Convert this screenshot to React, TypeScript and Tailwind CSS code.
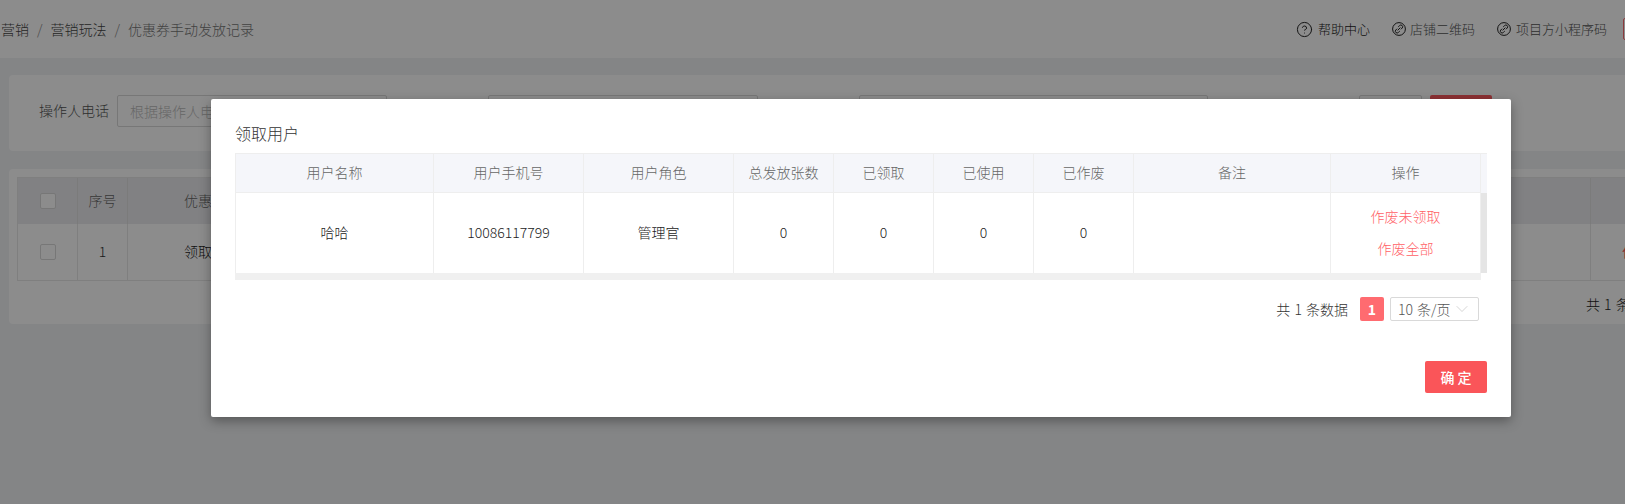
import { ChevronDown, CircleHelp } from 'lucide-react'

const columns = ['用户名称', '用户手机号', '用户角色', '总发放张数', '已领取', '已使用', '已作废', '备注', '操作']
const values = ['哈哈', '10086117799', '管理官', '0', '0', '0', '0', '']

function LinkCircle() {
  return (
    <svg width="14" height="14" viewBox="0 0 14 14" fill="none" stroke="currentColor" strokeWidth="1" className="shrink-0">
      <circle cx="7" cy="7" r="6.4" />
      <path d="M6.2 4.9 7.6 3.6a1.6 1.6 0 0 1 2.6 2.4L8.9 7.3" />
      <path d="M7.8 9.1 6.4 10.4a1.6 1.6 0 0 1-2.6-2.4l1.3-1.3" />
      <path d="M5.6 8.4 8.4 5.6" />
    </svg>
  )
}

function Checkbox() {
  return <div className="w-4 h-4 rounded-[2px] border border-[#d9d9d9] bg-white" />
}

export default function App() {
  return (
    <div className="relative w-[1625px] h-[504px] overflow-hidden bg-[#f0f2f5] text-sm font-light text-[#333] font-['Noto_Sans_CJK_SC','Noto_Sans',sans-serif]">
      <div className="w-[1708px]">
        {/* ヘッダー */}
        <div className="h-[58px] bg-white flex items-center">
          <div className="w-[1296px] shrink-0 pl-[1px] flex items-center text-[#555]">
            <span className="text-[#444]">营销</span>
            <span className="mx-[8px] text-[#888]">/</span>
            <span className="text-[#444]">营销玩法</span>
            <span className="mx-[8px] text-[#888]">/</span>
            <span className="text-[#777]">优惠券手动发放记录</span>
          </div>
          <div className="flex items-center text-[13px] text-[#222]">
            <CircleHelp size={17} strokeWidth={1.4} className="shrink-0" />
            <span className="ml-[5px] w-[74px]">帮助中心</span>
            <LinkCircle />
            <span className="ml-[4px] w-[87px] text-[#555]">店铺二维码</span>
            <LinkCircle />
            <span className="ml-[5px] w-[107px] text-[#555]">项目方小程序码</span>
            <div className="w-[60px] h-[22px] rounded-[2px] border border-[#ff6b70]" />
          </div>
        </div>

        {/* 検索エリア */}
        <div className="pt-[17px] pl-[9px]">
          <div className="h-[76px] bg-white rounded-[4px] pt-[20px] pl-[30px] flex items-start">
            <span className="w-[78px] leading-[30px] text-[#555]">操作人电话</span>
            <div className="w-[270px] h-8 pl-3 leading-[30px] border border-[#d9d9d9] rounded-[2px] text-[#bbb]">根据操作人电话搜索</div>
            <span className="w-[101px] leading-[32px] text-center text-[#555]">优惠券名称</span>
            <div className="w-[270px] h-8 border border-[#d9d9d9] rounded-[2px]" />
            <span className="w-[101px] leading-[32px] text-center text-[#555]">发放时间</span>
            <div className="w-[349px] h-8 border border-[#d9d9d9] rounded-[2px]" />
            <div className="w-[151px] shrink-0" />
            <div className="w-[63px] h-8 border border-[#d9d9d9] rounded-[2px] text-center leading-[30px]">重置</div>
            <div className="ml-[8px] w-[62px] h-8 rounded-[2px] bg-[#ff5a5f] text-white text-center leading-[32px]">查询</div>
          </div>
        </div>

        {/* 発放記録 */}
        <div className="pt-[18px] pl-[9px]">
          <div className="h-[155px] bg-white rounded-[4px] pt-[8px] pl-[8px] pr-[8px]">
            <div className="grid grid-cols-[60px_50px_182px_1fr_109px] border border-[#e8e8e8] h-[104px] grid-rows-[46px_56px]">
              <div className="bg-[#ebecef] flex items-center justify-center border-r border-[#e0e0e0]"><Checkbox /></div>
              <div className="bg-[#ebecef] flex items-center justify-center border-r border-[#e0e0e0] text-[#666] pb-[2px]">序号</div>
              <div className="bg-[#ebecef] flex items-center justify-center text-[#666] pb-[2px]">优惠券名称</div>
              <div className="bg-[#ebecef]" />
              <div className="bg-[#ebecef] border-l border-[#e0e0e0]" />
              <div className="flex items-center justify-center border-r border-[#e8e8e8]"><Checkbox /></div>
              <div className="flex items-center justify-center border-r border-[#e8e8e8] pb-[2px]">1</div>
              <div className="flex items-center justify-center pb-[2px] text-[#222]">领取用户券</div>
              <div />
              <div className="border-l border-[#e8e8e8] flex items-center pl-[31px] pb-[2px] font-normal text-[#ff5a5f]">作废</div>
            </div>
            <div className="pt-[13px] pl-[1569px] leading-[20px] [word-spacing:1px] text-[#222]">共 1 条数据</div>
          </div>
        </div>
      </div>

      {/* 弹窗 */}
      <div className="absolute inset-0 bg-black/45 pt-[99px] pl-[211px]">
        <div className="w-[1300px] h-[318px] bg-white rounded-[2px] shadow-[0_4px_12px_rgba(0,0,0,0.35)] pt-[24px] px-[24px]">
          <div className="h-[30px] text-base leading-[20px] text-[#333]">领取用户</div>
          <div className="w-[1252px]">
            <div className="flex h-[40px] bg-[#f5f6fa] border-t border-[#eeeeee]">
              <div className="w-[1246px] shrink-0 grid grid-cols-[198px_150px_150px_100px_100px_100px_100px_197px_150px] border-b border-l border-[#eeeeee]">
                {columns.map((c) => (
                  <div key={c} className="flex items-center justify-center border-r border-[#eeeeee] text-[#666] pb-[2px]">{c}</div>
                ))}
              </div>
            </div>
            <div className="flex h-[80px]">
              <div className="w-[1246px] shrink-0 grid grid-cols-[198px_150px_150px_100px_100px_100px_100px_197px_150px] border-l border-[#eeeeee]">
                {values.map((v, i) => (
                  <div key={i} className="flex items-center justify-center border-r border-[#eeeeee] text-[#222] pb-[3px]">{v}</div>
                ))}
                <div className="flex flex-col items-center justify-center gap-[10px] border-r border-[#eeeeee] text-[#ff6166] pb-[3px]">
                  <span className="leading-[22px]">作废未领取</span>
                  <span className="leading-[22px]">作废全部</span>
                </div>
              </div>
              <div className="w-[6px] bg-[#e5e5e5]" />
            </div>
            <div className="w-[1246px] h-[7px] bg-[#f0f0f0]" />
          </div>

          <div className="w-[1252px] mt-[17px] flex items-center justify-end pr-[8px] h-[24px]">
            <span className="text-[#333] [word-spacing:1px]">共 1 条数据</span>
            <div className="ml-[12px] w-6 h-6 rounded-[2px] bg-[#ff6b70] text-white font-bold flex items-center justify-center">1</div>
            <div className="ml-[6px] w-[89px] h-6 rounded-[2px] border border-[#d9d9d9] flex items-center pl-[7px] text-[#555]">
              <span className="w-[54px] shrink-0 [word-spacing:1px]">10 条/页</span>
              <ChevronDown size={20} strokeWidth={1} className="text-[#ccc] shrink-0" />
            </div>
          </div>

          <div className="w-[1252px] mt-[40px] flex justify-end">
            <div className="w-[62px] h-8 rounded-[2px] bg-[#fa5559] text-white font-medium flex items-center justify-center">确 定</div>
          </div>
        </div>
      </div>
    </div>
  )
}
